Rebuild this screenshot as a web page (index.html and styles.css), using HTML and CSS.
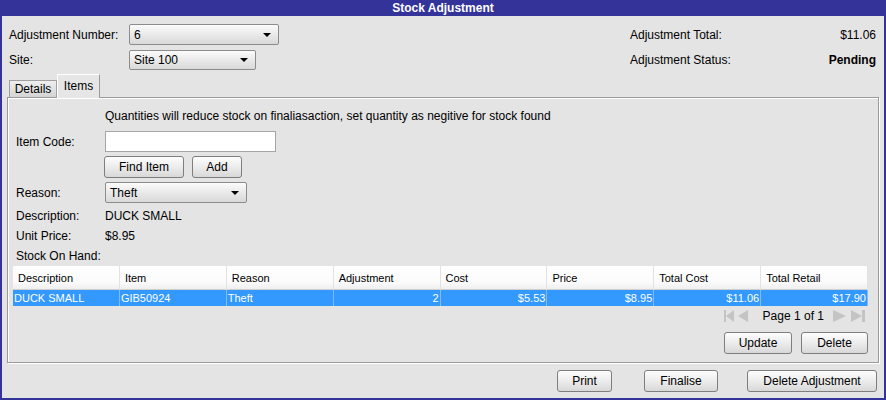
FILE: index.html
```html
<!DOCTYPE html>
<html lang="en">
<head>
<meta charset="UTF-8" />
<title>Stock Adjustment</title>
<link rel="stylesheet" href="styles.css">
</head>
<body>
<div class="window">
  <div class="titlebar">Stock Adjustment</div>

  <div class="header">
    <div class="header-left">
      <div class="field-row row-tall">
        <span class="head-label">Adjustment Number:</span>
        <div class="select select-number"><span>6</span><i class="caret"></i></div>
      </div>
      <div class="field-row row-short">
        <span class="head-label">Site:</span>
        <div class="select select-site"><span>Site 100</span><i class="caret"></i></div>
      </div>
    </div>
    <div class="header-right">
      <div class="summary-row row-tall"><span>Adjustment Total:</span><span>$11.06</span></div>
      <div class="summary-row row-short"><span>Adjustment Status:</span><b>Pending</b></div>
    </div>
  </div>

  <div class="tabs">
    <div class="tab">Details</div>
    <div class="tab tab-active">Items</div>
  </div>

  <div class="tab-panel">
    <div class="notice">Quantities will reduce stock on finaliasaction, set quantity as negitive for stock found</div>

    <div class="item-row row-code">
      <span class="item-label">Item Code:</span>
      <input class="text-input" type="text" value="">
    </div>
    <div class="item-row row-buttons">
      <span class="item-label"></span>
      <button class="btn btn-find">Find Item</button>
      <button class="btn btn-add">Add</button>
    </div>
    <div class="item-row row-reason">
      <span class="item-label">Reason:</span>
      <div class="select select-reason"><span>Theft</span><i class="caret"></i></div>
    </div>
    <div class="item-row row-info">
      <span class="item-label">Description:</span><span>DUCK SMALL</span>
    </div>
    <div class="item-row row-info">
      <span class="item-label">Unit Price:</span><span>$8.95</span>
    </div>
    <div class="item-row row-info">
      <span class="item-label">Stock On Hand:</span>
    </div>

    <div class="grid">
      <div class="grid-head">
        <div>Description</div><div>Item</div><div>Reason</div><div>Adjustment</div>
        <div>Cost</div><div>Price</div><div>Total Cost</div><div>Total Retail</div>
      </div>
      <div class="grid-row selected">
        <div>DUCK SMALL</div><div>GIB50924</div><div>Theft</div><div class="num">2</div>
        <div class="num">$5.53</div><div class="num">$8.95</div><div class="num">$11.06</div><div class="num">$17.90</div>
      </div>
    </div>

    <div class="pager">
      <svg class="pager-icon icon-first" width="10" height="12" viewBox="0 0 10 12"><rect x="0" y="0" width="2" height="12"/><polygon points="10,0 2,6 10,12"/></svg>
      <svg class="pager-icon icon-prev" width="11" height="12" viewBox="0 0 11 12"><polygon points="11,0 1,6 11,12"/></svg>
      <span class="pager-text">Page 1 of 1</span>
      <svg class="pager-icon icon-next" width="13" height="12" viewBox="0 0 13 12"><polygon points="0,0 13,6 0,12"/></svg>
      <svg class="pager-icon icon-last" width="14" height="12" viewBox="0 0 14 12"><polygon points="0,0 11,6 0,12"/><rect x="11" y="0" width="3" height="12"/></svg>
    </div>

    <div class="panel-actions">
      <button class="btn btn-update">Update</button>
      <button class="btn btn-delete">Delete</button>
    </div>
  </div>

  <div class="footer">
    <button class="btn btn-print">Print</button>
    <button class="btn btn-finalise">Finalise</button>
    <button class="btn btn-delete-adj">Delete Adjustment</button>
  </div>
</div>
</body>
</html>
```

FILE: styles.css
```css
/* Genel */
body {
  margin: 0;
  font-family: "Liberation Sans", Arial, sans-serif;
  font-size: 12px;
  color: #000;
  background: #e4e4e4;
}

.window {
  width: 886px;
  height: 400px;
  box-sizing: border-box;
  border: 2px solid #333399;
  border-top: 0;
  background: #e4e4e4;
  display: flex;
  flex-direction: column;
}

.titlebar {
  height: 16px;
  line-height: 16px;
  background: #333399;
  color: #fff;
  font-weight: bold;
  text-align: center;
}

/* Ust kisim */
.header {
  display: flex;
  justify-content: space-between;
  padding: 8px 8px 0 7px;
}
.header-left, .header-right {
  display: flex;
  flex-direction: column;
  gap: 5px;
}
.header-right {
  width: 246px;
}
.row-tall { height: 21px; }
.row-short { height: 20px; }
.field-row {
  display: flex;
  align-items: center;
}
.head-label {
  width: 120px;
}
.summary-row {
  display: flex;
  align-items: center;
  justify-content: space-between;
}

/* Acilir kutular */
.select {
  position: relative;
  box-sizing: border-box;
  display: flex;
  align-items: center;
  padding-left: 4px;
  border: 1px solid #8c8c8c;
  border-radius: 2px;
  background: linear-gradient(#fbfbfb, #e6e6e6 60%, #d9d9d9);
}
.select-number { width: 150px; height: 21px; }
.select-site { width: 127px; height: 20px; }
.select-reason { width: 142px; height: 21px; }
.caret {
  position: absolute;
  right: 7px;
  top: 50%;
  margin-top: -2px;
  width: 0;
  height: 0;
  border-left: 4px solid transparent;
  border-right: 4px solid transparent;
  border-top: 4px solid #000;
}

/* Sekmeler */
.tabs {
  display: flex;
  align-items: flex-end;
  height: 24px;
  margin-top: 3px;
  padding-left: 7px;
}
.tab {
  box-sizing: border-box;
  height: 17px;
  width: 48px;
  padding-top: 1px;
  text-align: center;
  border: 1px solid #a0a0a0;
  border-bottom: 0;
  background: linear-gradient(#efefef, #d4d4d4);
}
.tab-active {
  position: relative;
  width: 43px;
  height: 24px;
  margin-bottom: -1px;
  padding-top: 4px;
  border-color: #9a9a9a;
  border-left-color: #fff;
  border-top-color: #fff;
  background: #e6e6e6;
  z-index: 1;
}

.tab-panel {
  box-sizing: border-box;
  height: 266px;
  margin: 0 5px;
  padding: 10px 8px 0 8px;
  border: 1px solid #9a9a9a;
  box-shadow: inset 1px 1px 0 #fff, 1px 1px 0 #fff;
  display: flex;
  flex-direction: column;
}

.notice {
  height: 16px;
  line-height: 16px;
  padding-left: 89px;
}

.item-row {
  display: flex;
  align-items: center;
}
.item-label {
  width: 89px;
  flex: none;
}
.row-code { height: 21px; margin-top: 7px; }
.row-buttons { height: 22px; margin-top: 4px; }
.row-reason { height: 21px; margin-top: 4px; }
.row-info { height: 20px; }
.row-reason + .row-info { margin-top: 3px; }

.text-input {
  box-sizing: border-box;
  width: 171px;
  height: 21px;
  margin: 0;
  border: 1px solid #a5a5a5;
  background: #fff;
  font: inherit;
}

/* Butonlar */
.btn {
  box-sizing: border-box;
  height: 22px;
  margin: 0;
  padding: 0;
  font: inherit;
  color: #000;
  border: 1px solid #7e7e7e;
  border-radius: 3px;
  background: linear-gradient(#fdfdfd, #ececec 50%, #d8d8d8);
}
.btn-find { width: 80px; margin-left: -1px; }
.btn-add { width: 50px; margin-left: 8px; }

/* Tablo */
.grid {
  width: 855px;
  margin: 0 0 0 -3px;
  font-size: 11px;
}
.grid-head, .grid-row {
  display: grid;
  grid-template-columns: repeat(8, 1fr);
}
.grid-head {
  height: 23px;
  background: linear-gradient(#ffffff, #fbfbfb 70%, #efefef);
  border-bottom: 1px solid #cfcfcf;
}
.grid-head div {
  line-height: 24px;
  padding-left: 5px;
  border-right: 1px solid #e2e2e2;
}
.grid-row {
  height: 16px;
  line-height: 16px;
}
.grid-row div {
  padding: 0 1px;
  border-right: 1px solid #7dbcff;
  overflow: hidden;
  white-space: nowrap;
}
.grid-row.selected {
  background: #3399ff;
  color: #fff;
}
.grid-row .num {
  text-align: right;
}

/* Sayfalama */
.pager {
  display: flex;
  align-items: center;
  justify-content: flex-end;
  height: 12px;
  margin-top: 4px;
  padding-right: 5px;
}
.pager-icon {
  flex: none;
  fill: #c4c4c4;
}
.icon-prev { margin-left: 3px; }
.pager-text {
  flex: none;
  white-space: nowrap;
  margin: 0 9px 0 15px;
  font-size: 12px;
}
.icon-last { margin-left: 5px; }

.panel-actions {
  display: flex;
  justify-content: flex-end;
  gap: 9px;
  margin-top: 10px;
  padding-right: 2px;
}
.btn-update { width: 68px; }
.btn-delete { width: 67px; }

/* Alt butonlar */
.footer {
  display: flex;
  justify-content: flex-end;
  padding: 7px 7px 0 0;
}
.btn-print { width: 55px; }
.btn-finalise { width: 74px; margin-left: 32px; }
.btn-delete-adj { width: 130px; margin-left: 29px; }
```
